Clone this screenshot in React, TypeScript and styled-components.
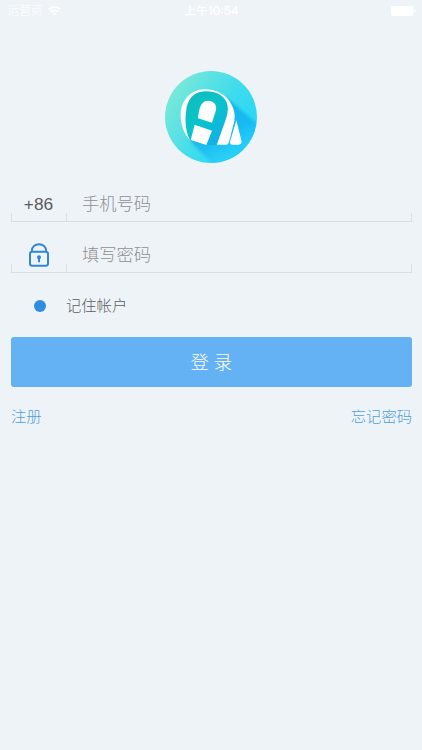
import React from "react";
import styled, { createGlobalStyle } from "styled-components";

const GlobalStyle = createGlobalStyle`
  * { box-sizing: border-box; }
  body { margin: 0; background: #eef3f8; }
  button, input { font: inherit; }
`;

const Screen = styled.main`
  width: 422px;
  height: 750px;
  display: flex;
  flex-direction: column;
  overflow: hidden;
  background: #eef3f8;
  font-family: "Liberation Sans", "Noto Sans CJK SC", sans-serif;
  font-weight: 300;
`;

const StatusBar = styled.header`
  height: 22px;
  flex: none;
  display: grid;
  grid-template-columns: 1fr auto 1fr;
  align-items: center;
  padding: 0 6px 0 7px;
  color: #fff;
  font-size: 12px;
  line-height: 22px;
`;

const Carrier = styled.div`
  display: flex;
  align-items: center;
  gap: 5px;
  font-weight: 300;
`;

const Clock = styled.time`
  font-family: Inter, "Noto Sans CJK SC", sans-serif;
  font-size: 11.8px;
  font-weight: 500;
`;

const Battery = styled.svg`
  justify-self: end;
`;

const Logo = styled.svg`
  flex: none;
  display: block;
  margin: 49px 0 0 165px;
`;

const Form = styled.form`
  display: flex;
  flex-direction: column;
  padding: 21px 10px 0 11px;
`;

const Field = styled.label`
  height: 38px;
  margin-bottom: 13px;
  display: grid;
  grid-template-columns: 55px 1fr;
  align-items: center;
  padding-top: 3px;
  border-bottom: 1px solid #dadee3;
  background:
    linear-gradient(#dde1e6, #dde1e6) left bottom / 1px 8px no-repeat,
    linear-gradient(#dde1e6, #dde1e6) 55px bottom / 1px 8px no-repeat,
    linear-gradient(#dde1e6, #dde1e6) right bottom / 1px 8px no-repeat;
`;

const Prefix = styled.span`
  display: flex;
  justify-content: center;
  color: #5a5a5c;
  font-size: 17.3px;
`;

const Input = styled.input`
  width: 100%;
  height: 30px;
  padding: 0 0 0 16px;
  border: 0;
  outline: 0;
  background: transparent;
  font-size: 17.3px;
  &::placeholder { color: #8e9093; opacity: 1; }
`;

const Remember = styled.div`
  height: 28px;
  margin-top: 4px;
  display: grid;
  grid-template-columns: 55px 1fr;
  align-items: center;
  color: #5c5c5e;
  font-size: 15.3px;
`;

const Dot = styled.span`
  width: 12px;
  height: 12px;
  margin: 3px 0 0 22.5px;
  border-radius: 50%;
  background: #308ddd;
`;

const Submit = styled.button`
  height: 50.5px;
  margin: 18.5px 0.5px 0 0;
  padding: 0 0 2px;
  border: 0;
  border-radius: 3px;
  background: #64b1f3;
  color: #fff;
  font-size: 18.3px;
  font-weight: 300;
`;

const Links = styled.nav`
  display: flex;
  justify-content: space-between;
  margin-top: 18px;
  line-height: 24px;
  color: #4f9fdd;
  font-size: 15.3px;
`;

export default function App() {
  return (
    <>
      <GlobalStyle />
      <Screen>
        <StatusBar>
          <Carrier>
            运营商
            <svg width="13" height="10" viewBox="0 0 13 10" fill="none" stroke="#fff" strokeWidth="1.8">
              <path d="M.7 3.4a8.2 8.2 0 0 1 11.6 0M2.8 5.8a5.2 5.2 0 0 1 7.4 0" />
              <path d="M4.7 7.4a2.5 2.5 0 0 1 3.6 0L6.5 9.4z" fill="#fff" stroke="none" />
            </svg>
          </Carrier>
          <Clock>上午10:54</Clock>
          <Battery width="25" height="10" viewBox="0 0 25 10" fill="#fff">
            <rect width="22.5" height="10" rx="2" />
            <path d="M23.3 3.2q1.4.4 1.4 1.8t-1.4 1.8z" />
          </Battery>
        </StatusBar>

        <Logo width="92" height="92" viewBox="27 21 276 276">
          <defs>
            <linearGradient id="disc" x1="0" y1=".15" x2="1" y2=".8">
              <stop offset="0" stopColor="#83ebd5" />
              <stop offset=".55" stopColor="#40dcec" />
              <stop offset="1" stopColor="#20d5fb" />
            </linearGradient>
            <linearGradient id="shade" gradientUnits="userSpaceOnUse" x1="190" y1="150" x2="255" y2="265">
              <stop offset="0" stopColor="#12aee6" stopOpacity=".85" />
              <stop offset=".5" stopColor="#10b2f3" stopOpacity=".75" />
              <stop offset="1" stopColor="#14bdfa" stopOpacity=".25" />
            </linearGradient>
            <linearGradient id="letter" x1="0" y1="0" x2=".8" y2="1">
              <stop offset="0" stopColor="#10bcb8" />
              <stop offset=".5" stopColor="#08c4cb" />
              <stop offset="1" stopColor="#13aee8" />
            </linearGradient>
            <filter id="soft" x="-10%" y="-10%" width="120%" height="120%">
              <feGaussianBlur stdDeviation="4" />
            </filter>
            <clipPath id="round"><circle cx="165" cy="159" r="138" /></clipPath>
          </defs>
          <circle cx="165" cy="159" r="138" fill="url(#disc)" />
          <g clipPath="url(#round)">
            <path filter="url(#soft)" fill="url(#shade)" d="M208 98L320 192V320H190L104 233L150 150z" />
          </g>
          <path fill="#fff" d="M104 229C83 211 73 181 74 150C76 107 105 77 145 76C183 76 213 94 226 121C235 138 238 152 235 171L219 234Q217 242 211 242H182L150 200z" />
          <path fill="url(#letter)" d="M104 230C91 211 86 178 90 143C94 105 113 83 147 82C184 81 211 99 215 126C217 140 213 157 208 170L182 243H150z" />
          <path fill="#fff" d="M241 169L256 229Q259 242 247 242H230Q220 242 223 230z" />
          <path fill="#fff" d="M126 163C129 134 134 110 156 110C174 110 183 123 180 138L168 176zM116 182L168 200L151 243L104 228z" />
        </Logo>

        <Form onSubmit={(event) => event.preventDefault()}>
          <Field>
            <Prefix>+86</Prefix>
            <Input type="tel" placeholder="手机号码" />
          </Field>
          <Field>
            <Prefix>
              <svg width="20" height="24" viewBox="0 0 20 24" fill="none" stroke="#3088d5" strokeWidth="2">
                <rect x="1" y="8.8" width="18" height="14" rx="2.2" />
                <path d="M2.9 8.5V7.5a7.1 6.3 0 0 1 14.2 0v1" strokeWidth="1.9" />
                <circle cx="10" cy="14.3" r="2" fill="#3088d5" stroke="none" />
                <path d="M10 14v5.2" />
              </svg>
            </Prefix>
            <Input type="password" placeholder="填写密码" />
          </Field>
          <Remember><Dot />记住帐户</Remember>
          <Submit>登 录</Submit>
          <Links><span>注册</span><span>忘记密码</span></Links>
        </Form>
      </Screen>
    </>
  );
}
